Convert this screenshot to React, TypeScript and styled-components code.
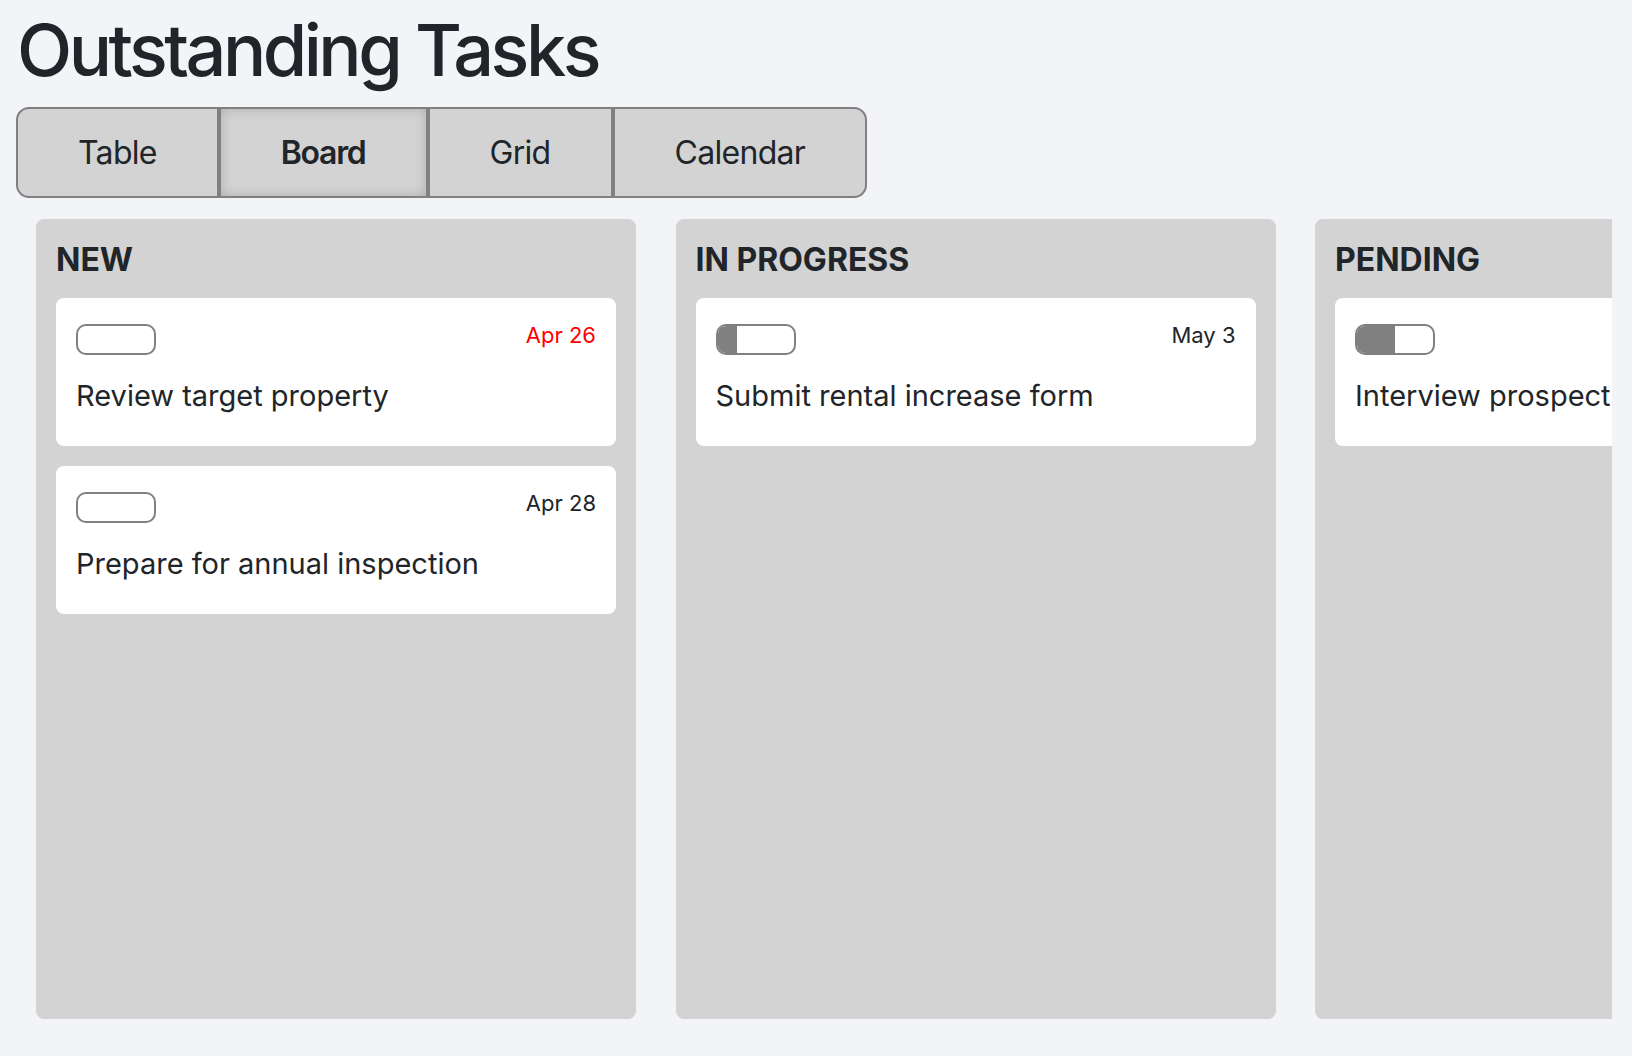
import React from "react";
import styled, { createGlobalStyle } from "styled-components";

const GlobalStyle = createGlobalStyle`
  html, body {
    margin: 0;
    padding: 0;
    background: #f3f4f8;
    color: #212529;
    font-family: Inter, "Noto Sans", "Liberation Sans", sans-serif;
  }
  * { box-sizing: border-box; }
`;

const Page = styled.div`
  padding: 0 20px 0 16px;
  width: 1632px;
  height: 1056px;
  overflow: hidden;
`;

const Title = styled.h1`
  margin: 14px 0 21px 1px;
  font-size: 72px;
  line-height: 72px;
  font-weight: 500;
  letter-spacing: -3.5px;
`;

const Tabs = styled.div`
  display: inline-flex;
  height: 91px;
`;

const Tab = styled.button<{ $active?: boolean }>`
  height: 100%;
  padding: 0 60px;
  margin: 0;
  border: 2px solid #808080;
  background: #d3d3d3;
  color: #212529;
  font-family: inherit;
  font-size: 32px;
  letter-spacing: ${(p) => (p.$active ? "-1.3px" : "-0.7px")};
  font-weight: ${(p) => (p.$active ? 600 : 400)};
  box-shadow: ${(p) => (p.$active ? "inset 0 0 12px rgba(0,0,0,0.18)" : "none")};
  cursor: pointer;
  &:first-child { border-radius: 13px 0 0 13px; }
  &:last-child { border-radius: 0 13px 13px 0; }
`;

const Board = styled.div`
  margin-top: 21px;
  padding-left: 20px;
  display: flex;
  gap: 39.5px;
  overflow: hidden;
`;

const Column = styled.section`
  flex: 0 0 600px;
  height: 800px;
  background: #d3d3d3;
  border-radius: 8px;
  padding: 20px;
  display: flex;
  flex-direction: column;
  gap: 20px;
`;

const ColumnTitle = styled.h2`
  margin: 1px 0 -2px;
  font-size: 32px;
  line-height: 40px;
  font-weight: 700;
`;

const Card = styled.div`
  background: #fff;
  border-radius: 8px;
  padding: 26px 20px 0;
  height: 148px;
  width: 560px;
  flex: 0 0 auto;
`;

const CardTop = styled.div`
  display: flex;
  justify-content: space-between;
  align-items: flex-start;
`;

const Progress = styled.div`
  width: 80px;
  height: 31px;
  border: 2px solid #808080;
  border-radius: 10px;
  overflow: hidden;
  background: #fff;
`;

const ProgressFill = styled.div`
  height: 100%;
  background: #808080;
`;

const Due = styled.span<{ $overdue?: boolean }>`
  margin-top: 0;
  font-size: 22px;
  line-height: 22px;
  color: ${(p) => (p.$overdue ? "#ff0000" : "#212529")};
`;

const CardTitle = styled.div`
  margin-top: 23px;
  font-size: 29px;
  line-height: 35px;
  white-space: nowrap;
`;

type Task = { title: string; due?: string; overdue?: boolean; progress: number };

const columns: { name: string; tasks: Task[] }[] = [
  {
    name: "NEW",
    tasks: [
      { title: "Review target property", due: "Apr 26", overdue: true, progress: 0 },
      { title: "Prepare for annual inspection", due: "Apr 28", progress: 0 },
    ],
  },
  {
    name: "IN PROGRESS",
    tasks: [{ title: "Submit rental increase form", due: "May 3", progress: 25 }],
  },
  {
    name: "PENDING",
    tasks: [{ title: "Interview prospective tenants", progress: 50 }],
  },
];

const tabs = ["Table", "Board", "Grid", "Calendar"];

export default function App() {
  return (
    <>
      <GlobalStyle />
      <Page>
        <Title>Outstanding Tasks</Title>
        <Tabs>
          {tabs.map((t) => (
            <Tab key={t} $active={t === "Board"}>
              {t}
            </Tab>
          ))}
        </Tabs>
        <Board>
          {columns.map((c) => (
            <Column key={c.name}>
              <ColumnTitle>{c.name}</ColumnTitle>
              {c.tasks.map((t) => (
                <Card key={t.title}>
                  <CardTop>
                    <Progress>
                      <ProgressFill style={{ width: `${t.progress}%` }} />
                    </Progress>
                    {t.due && <Due $overdue={t.overdue}>{t.due}</Due>}
                  </CardTop>
                  <CardTitle>{t.title}</CardTitle>
                </Card>
              ))}
            </Column>
          ))}
        </Board>
      </Page>
    </>
  );
}
